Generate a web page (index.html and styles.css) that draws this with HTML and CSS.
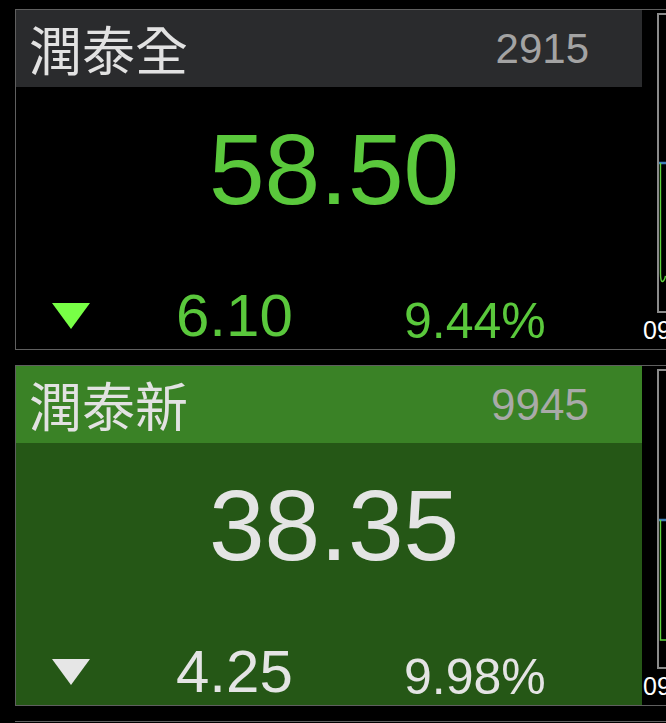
FILE: index.html
```html
<!DOCTYPE html>
<html lang="zh-Hant">
<head>
    <meta charset="UTF-8">
    <meta name="viewport" content="width=device-width, initial-scale=1.0">
    <title>Quotes</title>
    <link rel="stylesheet" href="styles.css">
</head>
<body>
    <div class="board">
        <!-- 2915 -->
        <div class="quote">
            <div class="card card-dark">
                <div class="card-head">
                    <span class="name">潤泰全</span>
                    <span class="code">2915</span>
                </div>
                <div class="card-body">
                    <div class="price">58.50</div>
                    <div class="change">
                        <span class="arrow"></span>
                        <span class="diff">6.10</span>
                        <span class="pct">9.44%</span>
                    </div>
                </div>
            </div>
            <div class="spark">
                <div class="spark-box">
                    <svg class="spark-line" width="30" height="296" viewBox="0 0 30 296">
                        <line x1="0" y1="148" x2="30" y2="148" stroke="#3f7fb8" stroke-width="2.5"/>
                        <path d="M1.5 148 L1.5 258 Q1.5 267 3.5 266.5 Q5.5 266 6.5 261" fill="none" stroke="#5fd23c" stroke-width="1.4"/>
                    </svg>
                </div>
                <div class="spark-time">09</div>
            </div>
        </div>

        <!-- 9945 -->
        <div class="quote">
            <div class="card card-green">
                <div class="card-head">
                    <span class="name">潤泰新</span>
                    <span class="code">9945</span>
                </div>
                <div class="card-body">
                    <div class="price">38.35</div>
                    <div class="change">
                        <span class="arrow"></span>
                        <span class="diff">4.25</span>
                        <span class="pct">9.98%</span>
                    </div>
                </div>
            </div>
            <div class="spark">
                <div class="spark-box">
                    <svg class="spark-line" width="30" height="296" viewBox="0 0 30 296">
                        <line x1="0" y1="149" x2="30" y2="149" stroke="#3f7fb8" stroke-width="2.5"/>
                        <path d="M1.5 149 L1.5 269 L30 269" fill="none" stroke="#5fd23c" stroke-width="1.4"/>
                    </svg>
                </div>
                <div class="spark-time">09</div>
            </div>
        </div>

        <div class="quote quote-next"></div>
    </div>
</body>
</html>
```

FILE: styles.css
```css
body {
    margin: 0;
    background-color: #000000;
    font-family: 'Liberation Sans', Arial, sans-serif;
    overflow: hidden;
}
.board {
    display: flex;
    flex-direction: column;
    gap: 15px;
    padding: 9px 0 0 15px;
}
.quote {
    display: flex;
    border-top: 1px solid #5f5f5f;
    border-bottom: 1px solid #5f5f5f;
}
.quote-next {
    height: 0;
    border-bottom: none;
}
.card {
    width: 626px;
    flex: none;
    display: flex;
    flex-direction: column;
    border-left: 1px solid #5f5f5f;
}
.card-head {
    height: 77px;
    display: flex;
    align-items: center;
    justify-content: space-between;
    padding: 0 53px 0 13px;
}
.name {
    font-family: 'Noto Sans CJK TC', 'Noto Sans CJK SC', sans-serif;
    font-size: 53px;
    line-height: 1;
    color: #e2e2e2;
}
.code {
    font-size: 42px;
    line-height: 1;
    color: #a3a3a3;
}
.card-body {
    height: 262px;
    display: flex;
    flex-direction: column;
}
.price {
    font-size: 100px;
    line-height: 100px;
    text-align: center;
    margin-top: 32px;
    padding-left: 10px;
}
.change {
    margin-top: auto;
    display: flex;
    align-items: flex-end;
    padding-bottom: 3px;
}
.arrow {
    width: 0;
    height: 0;
    margin: 0 86px 17px 36px;
    border-left: 19px solid transparent;
    border-right: 19px solid transparent;
    border-top: 26px solid #78ff46;
}
.diff {
    width: 228px;
    font-size: 60px;
    line-height: 60px;
}
.pct {
    font-size: 50px;
    line-height: 50px;
}

/* colour themes */
.card-dark .card-head {
    background-color: #2a2b2d;
}
.card-dark .price,
.card-dark .diff,
.card-dark .pct {
    color: #5ac83c;
}
.card-green .card-head {
    background-color: #3a8226;
}
.card-green .card-body {
    background-color: #255716;
}
.card-green .code {
    color: #a9aaa8;
    font-size: 44px;
}
.card-green .price,
.card-green .diff,
.card-green .pct {
    color: #e4e4e4;
}
.card-green .arrow {
    border-top-color: #e6e6e6;
}

/* mini chart */
.spark {
    flex: 1;
    overflow: hidden;
}
.spark-box {
    width: 60px;
    height: 296px;
    margin: 3px 0 0 15px;
    border: 2px solid #8b8b8b;
}
.spark-line {
    display: block;
}
.spark-time {
    margin: 5px 0 0 1px;
    font-size: 25px;
    line-height: 25px;
    color: #ffffff;
    white-space: nowrap;
}
```
